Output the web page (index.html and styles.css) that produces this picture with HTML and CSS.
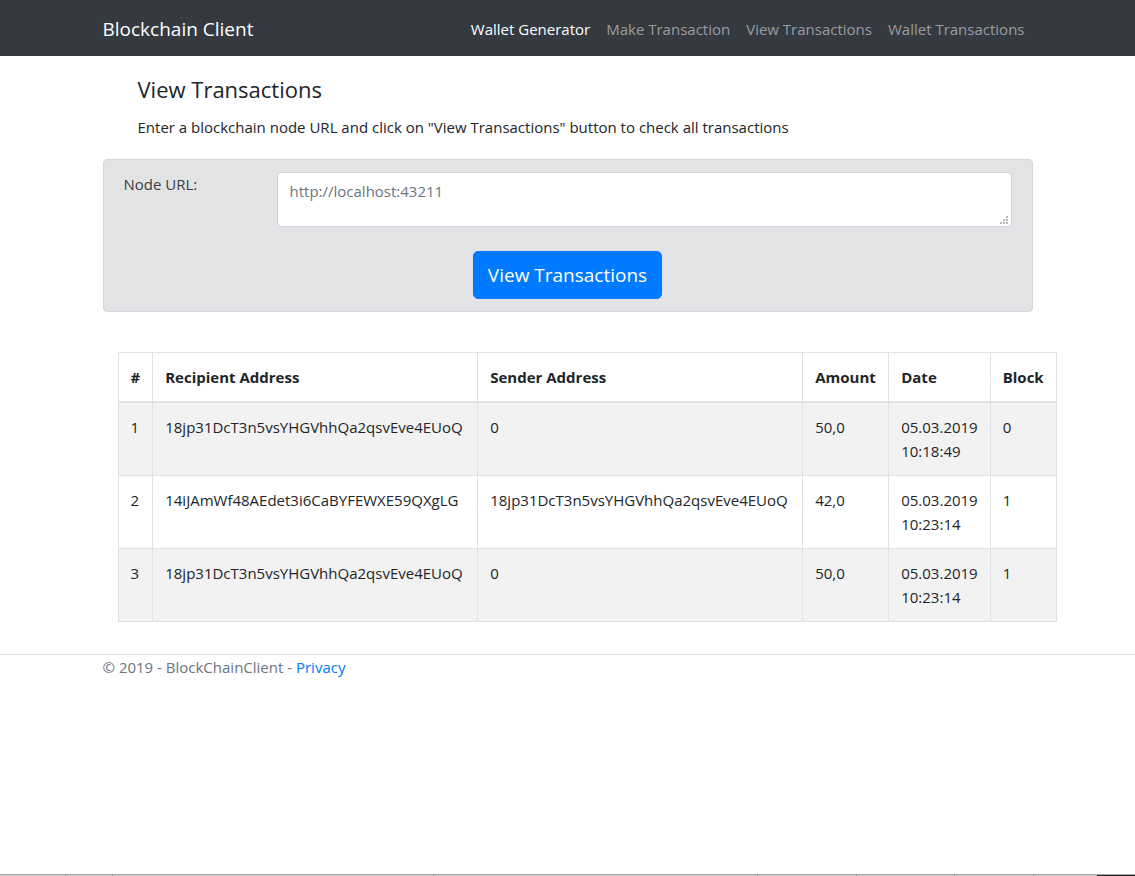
FILE: index.html
```html
<!DOCTYPE html>
<html lang="en">
<head>
<meta charset="utf-8">
<meta name="viewport" content="width=device-width, initial-scale=1">
<title>View Transactions - Blockchain Client</title>
<link rel="stylesheet" href="styles.css">
</head>
<body>
<header class="navbar">
  <div class="container navbar-inner">
    <a class="brand" href="#">Blockchain Client</a>
    <nav class="nav">
      <a class="nav-link active" href="#">Wallet Generator</a>
      <a class="nav-link" href="#">Make Transaction</a>
      <a class="nav-link" href="#">View Transactions</a>
      <a class="nav-link" href="#">Wallet Transactions</a>
    </nav>
  </div>
</header>
<main class="container">
  <div class="intro">
    <h1 class="title">View Transactions</h1>
    <p class="lead">Enter a blockchain node URL and click on "View Transactions" button to check all transactions</p>
  </div>
  <form class="panel">
    <div class="field">
      <label class="field-label" for="node-url">Node URL:</label>
      <div class="input-wrap">
        <textarea class="input" id="node-url" placeholder="http://localhost:43211"></textarea>
        <svg class="grip" viewBox="0 0 8 8" width="8" height="8" aria-hidden="true"><path d="M6 0h2v2H6zM3 3h2v2H3zM6 3h2v2H6zM0 6h2v2H0zM3 6h2v2H3zM6 6h2v2H6z"/></svg>
      </div>
    </div>
    <button class="button" type="button">View Transactions</button>
  </form>
  <div class="table-area">
    <table class="table">
      <thead>
        <tr><th class="col-index" scope="col">#</th><th class="col-address" scope="col">Recipient Address</th><th class="col-address" scope="col">Sender Address</th><th class="col-amount" scope="col">Amount</th><th class="col-date" scope="col">Date</th><th class="col-block" scope="col">Block</th></tr>
      </thead>
      <tbody>
        <tr><td>1</td><td>18jp31DcT3n5vsYHGVhhQa2qsvEve4EUoQ</td><td>0</td><td>50,0</td><td>05.03.2019 10:18:49</td><td>0</td></tr>
        <tr><td>2</td><td>14iJAmWf48AEdet3i6CaBYFEWXE59QXgLG</td><td>18jp31DcT3n5vsYHGVhhQa2qsvEve4EUoQ</td><td>42,0</td><td>05.03.2019 10:23:14</td><td>1</td></tr>
        <tr><td>3</td><td>18jp31DcT3n5vsYHGVhhQa2qsvEve4EUoQ</td><td>0</td><td>50,0</td><td>05.03.2019 10:23:14</td><td>1</td></tr>
      </tbody>
    </table>
  </div>
</main>
<footer class="footer">
  <div class="container">&copy; 2019 - BlockChainClient - <a class="link" href="#">Privacy</a></div>
</footer>
<div class="edge" aria-hidden="true"><svg class="edge-ticks" width="1135" height="2"><path fill="#999" d="M65 0h1v2h-1zM112 0h1v2h-1zM433 0h1v2h-1zM757 0h1v2h-1zM856 0h1v2h-1zM954 0h1v2h-1zM1033 0h1v2h-1z"/></svg><span class="edge-end"></span></div>
</body>
</html>
```
FILE: styles.css
```css
*, *::before, *::after { box-sizing: border-box; }

body {
  margin: 0;
  background: #fff;
  color: #212529;
  font: 15px/24px "Segoe UI", "Open Sans", sans-serif;
}

.container {
  width: 100%;
  max-width: 960px;
  margin: 0 auto;
  padding: 0 15px;
}

.navbar { background: #343a40; }

.navbar-inner {
  display: flex;
  align-items: center;
  justify-content: space-between;
  min-height: 56px;
  padding-top: 2px;
}

.brand {
  color: #fff;
  font-size: 19px;
  line-height: 30px;
  text-decoration: none;
}

.nav { display: flex; flex-wrap: wrap; }

.nav-link {
  padding: 8px;
  color: #999c9f;
  text-decoration: none;
}

.nav-link.active { color: #fff; }

.intro { padding: 19px 35px 0; }

.title {
  margin: 0 0 12px;
  font-size: 22px;
  font-weight: 400;
  line-height: 28px;
}

.lead { margin: 0 0 20px; }

.panel {
  padding: 12px 20px;
  border: 1px solid #d6d8db;
  border-radius: 4px;
  background: #e2e3e5;
  color: #383d41;
}

.field {
  display: grid;
  grid-template-columns: 153px 1fr;
  margin-bottom: 24px;
}

.input-wrap { position: relative; display: flex; }

.input {
  width: 100%;
  height: 55px;
  padding: 6px 12px;
  border: 1px solid #ced4da;
  border-radius: 4px;
  background: #fff;
  color: #495057;
  font: inherit;
  resize: none;
}

.input::placeholder { color: #6c757d; opacity: 1; }

.grip {
  position: absolute;
  right: 4px;
  bottom: 3px;
  fill: #b8b8b8;
}

.button {
  display: block;
  margin: 0 auto;
  padding: 8px 14px;
  border: 1px solid #007bff;
  border-radius: 5px;
  background: #007bff;
  color: #fff;
  font: inherit;
  font-size: 19px;
  line-height: 30px;
}

.table-area { padding: 40px 15px 32px; }

.table {
  border-collapse: collapse;
  border: 1px solid #dee2e6;
}

.table th, .table td {
  padding: 12px;
  border: 1px solid #dee2e6;
  text-align: left;
  vertical-align: top;
}

.table thead th { border-bottom-width: 2px; }
.table tbody tr:nth-child(odd) { background: #f2f2f2; }

.col-index { min-width: 34px; }
.col-address { min-width: 325px; }
.col-amount { min-width: 86px; }
.col-date { min-width: 101px; }
.col-block { min-width: 66px; }

.footer { border-top: 1px solid #dee2e6; color: #6c757d; }

.link { color: #007bff; text-decoration: none; }

.edge {
  position: fixed;
  right: 0;
  bottom: 0;
  left: 0;
  height: 2px;
  overflow: hidden;
  border-top: 1px solid #a6a6a6;
  background: #ccc;
}

.edge-ticks { display: block; }

.edge-end {
  position: absolute;
  right: 0;
  bottom: 0;
  width: 38px;
  height: 2px;
  background: #222;
}
```
